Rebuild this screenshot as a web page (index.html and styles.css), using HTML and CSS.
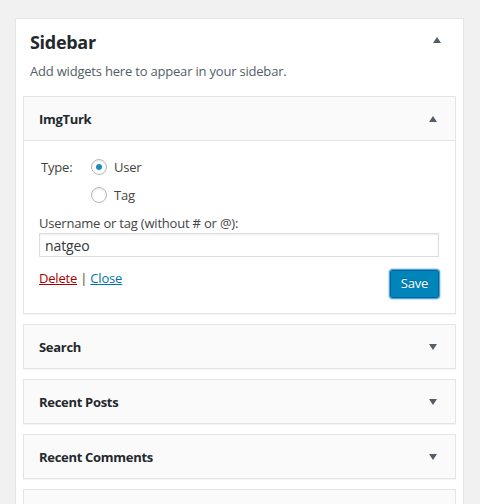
FILE: index.html
```html
<!DOCTYPE html>
<html>
<head>
<meta charset="utf-8">
<link rel="stylesheet" href="styles.css">
</head>
<body>
<div class="sidebar-box">
  <div class="sidebar-head">
    <h2 class="sidebar-title">Sidebar</h2>
    <span class="arrow arrow-up arrow-big"></span>
  </div>
  <p class="desc">Add widgets here to appear in your sidebar.</p>

  <div class="widget open">
    <div class="widget-top">
      <h3 class="widget-title">ImgTurk</h3>
      <span class="arrow arrow-up"></span>
    </div>
    <div class="inside">
      <div class="type-row">
        <span class="type-label">Type:</span>
        <div class="options">
          <label class="option"><input type="radio" name="t" checked><span>User</span></label>
          <label class="option"><input type="radio" name="t"><span>Tag</span></label>
        </div>
      </div>
      <label class="field-label" for="u">Username or tag (without # or @):</label>
      <input class="text-input" id="u" type="text" value="natgeo">
      <div class="actions">
        <div class="links"><a class="delete" href="#">Delete</a> | <a class="close" href="#">Close</a></div>
        <button class="save">Save</button>
      </div>
    </div>
  </div>

  <div class="widget">
    <div class="widget-top">
      <h3 class="widget-title">Search</h3>
      <span class="arrow arrow-down"></span>
    </div>
  </div>
  <div class="widget">
    <div class="widget-top">
      <h3 class="widget-title">Recent Posts</h3>
      <span class="arrow arrow-down"></span>
    </div>
  </div>
  <div class="widget">
    <div class="widget-top">
      <h3 class="widget-title">Recent Comments</h3>
      <span class="arrow arrow-down"></span>
    </div>
  </div>
  <div class="widget">
    <div class="widget-top"></div>
  </div>
</div>
</body>
</html>
```

FILE: styles.css
```css
html, body {
  margin: 0;
  padding: 0;
  background: #f1f1f1;
  height: 504px;
  overflow: hidden;
}
body {
  font-family: "Open Sans", "Noto Sans", sans-serif;
  font-size: 13px;
  color: #444;
  letter-spacing: -0.2px;
}
.sidebar-box {
  margin: 18px 0 0 15px;
  width: 447px;
  background: #fff;
  border: 1px solid #e5e5e5;
  box-shadow: 0 1px 1px rgba(0,0,0,.04);
  padding-bottom: 40px;
}
.sidebar-head {
  display: flex;
  justify-content: space-between;
  align-items: flex-start;
  padding: 0 22px 0 14px;
}
.sidebar-title {
  margin: 0;
  padding-top: 11px;
  font-size: 18px;
  line-height: 24px;
  font-weight: 700;
  color: #23282d;
  letter-spacing: -0.3px;
}
.arrow {
  display: block;
  width: 0;
  height: 0;
  border-left: 4px solid transparent;
  border-right: 4px solid transparent;
}
.arrow-up { border-bottom: 6px solid #555d66; }
.arrow-down { border-top: 6px solid #555d66; }
.arrow-big { margin-top: 18px; }
.desc {
  margin: 7px 0 15px;
  padding: 0 14px;
  line-height: 20px;
  color: #555d66;
}
.widget {
  margin: 0 7px 10px;
  border: 1px solid #e5e5e5;
  box-shadow: 0 1px 1px rgba(0,0,0,.04);
  background: #fff;
}
.widget-top {
  height: 43px;
  background: #fafafa;
  display: flex;
  align-items: center;
  justify-content: space-between;
  padding: 0 18px 0 15px;
}
.widget.open .widget-top {
  border-bottom: 1px solid #e5e5e5;
}
.widget-title {
  margin: 0;
  font-size: 13px;
  font-weight: 700;
  color: #23282d;
  line-height: 20px;
  letter-spacing: -0.3px;
}
.inside {
  padding: 12px 15px 15px;
}
.type-row {
  display: flex;
}
.type-label {
  width: 50px;
  padding-left: 2px;
  line-height: 28px;
}
.options {
  display: flex;
  flex-direction: column;
}
.option {
  display: flex;
  align-items: center;
  height: 28px;
}
.option input {
  appearance: none;
  -webkit-appearance: none;
  margin: 0 7px 0 0;
  width: 16px;
  height: 16px;
  border: 1px solid #b4b9be;
  border-radius: 50%;
  background: #fff;
  box-shadow: inset 0 1px 2px rgba(0,0,0,.1);
  display: flex;
  align-items: center;
  justify-content: center;
}
.option input:checked::before {
  content: "";
  width: 6px;
  height: 6px;
  border-radius: 50%;
  background: #1e8cbe;
}
.field-label {
  display: block;
  margin-top: 4px;
  line-height: 20px;
}
.text-input {
  display: block;
  box-sizing: border-box;
  width: 400px;
  height: 24px;
  margin: 0;
  padding: 0 5px;
  border: 1px solid #ddd;
  box-shadow: inset 0 1px 2px rgba(0,0,0,.07);
  font-family: inherit;
  font-size: 14px;
  letter-spacing: -0.1px;
  color: #32373c;
  background: #fff;
  outline: none;
}
.actions {
  display: flex;
  justify-content: space-between;
  align-items: flex-start;
  width: 400px;
  margin-top: 11px;
}
.links {
  line-height: 20px;
}
.delete { color: #a00; }
.close { color: #0073aa; }
.save {
  margin-top: 2px;
  box-sizing: border-box;
  width: 49px;
  height: 28px;
  padding: 0 0 2px;
  font-family: inherit;
  font-size: 13px;
  letter-spacing: -0.2px;
  color: #fff;
  background: #0085ba;
  border: 1px solid #006799;
  border-radius: 3px;
  box-shadow: 0 0 0 1px #5b9dd9, 0 0 2px 1px rgba(30,140,190,.8);
  text-shadow: 0 -1px 1px #006799;
}
```
